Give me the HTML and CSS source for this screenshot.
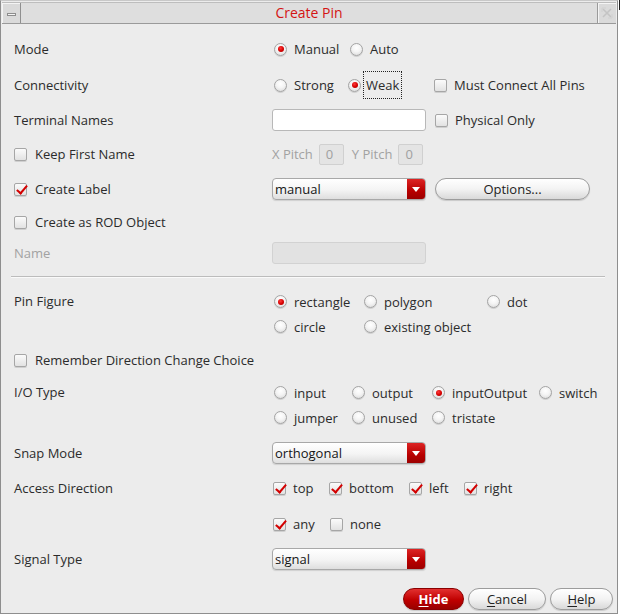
FILE: index.html
```html
<!DOCTYPE html>
<html>
<head>
<meta charset="utf-8">
<link rel="stylesheet" href="styles.css">
</head>
<body>
<div class="win">
  <div class="titlebar">
    <div class="tb-btn tb-min"><span class="dash"></span></div>
    <div class="title">Create Pin</div>
    <div class="tb-btn tb-close">
      <svg width="12" height="12" viewBox="0 0 12 12"><path d="M2 2 L10 10 M10 2 L2 10" stroke="#c4c4c4" stroke-width="1.6" fill="none"/><path d="M1 5 L1 1 L5 1 M7 11 L11 11 L11 7" stroke="#d0d0d0" stroke-width="1" fill="none"/></svg>
    </div>
  </div>

  <div class="form">
    <div class="row h36">
      <div class="label">Mode</div>
      <div class="opts c-mode">
        <label class="opt"><span class="radio on"></span>Manual</label>
        <label class="opt"><span class="radio"></span>Auto</label>
      </div>
    </div>

    <div class="row h36">
      <div class="label">Connectivity</div>
      <div class="opts c-conn">
        <label class="opt"><span class="radio"></span>Strong</label>
        <label class="opt"><span class="radio on"></span><span class="focus">Weak</span></label>
        <label class="opt"><span class="check"></span>Must Connect All Pins</label>
      </div>
    </div>

    <div class="row h34">
      <div class="label">Terminal Names</div>
      <div class="ctrls">
        <div class="textbox"></div>
        <label class="opt"><span class="check"></span>Physical Only</label>
      </div>
    </div>

    <div class="row h34">
      <label class="label opt"><span class="check"></span>Keep First Name</label>
      <div class="ctrls pitch">
        <span class="dim">X Pitch</span>
        <span class="pitchbox">0</span>
        <span class="dim ypitch">Y Pitch</span>
        <span class="pitchbox">0</span>
      </div>
    </div>

    <div class="row h36">
      <label class="label opt"><span class="check on"></span>Create Label</label>
      <div class="ctrls">
        <div class="combo"><span class="combo-text">manual</span><span class="combo-arrow"></span></div>
        <div class="btn options">Options...</div>
      </div>
    </div>

    <div class="row h30">
      <label class="label opt"><span class="check"></span>Create as ROD Object</label>
      <div></div>
    </div>

    <div class="row h32">
      <div class="label dim">Name</div>
      <div class="ctrls"><div class="textbox disabled"></div></div>
    </div>

    <div class="sep"></div>

    <div class="row multi pf">
      <div class="label">Pin Figure</div>
      <div class="opts c-pf">
        <label class="opt"><span class="radio on"></span>rectangle</label>
        <label class="opt"><span class="radio"></span>polygon</label>
        <label class="opt"><span class="radio"></span>dot</label>
        <label class="opt"><span class="radio"></span>circle</label>
        <label class="opt"><span class="radio"></span>existing object</label>
      </div>
    </div>

    <div class="row h40">
      <label class="label wide opt"><span class="check"></span>Remember Direction Change Choice</label>
    </div>

    <div class="row multi io">
      <div class="label">I/O Type</div>
      <div class="opts c-io">
        <label class="opt"><span class="radio"></span>input</label>
        <label class="opt"><span class="radio"></span>output</label>
        <label class="opt"><span class="radio on"></span>inputOutput</label>
        <label class="opt"><span class="radio"></span>switch</label>
        <label class="opt"><span class="radio"></span>jumper</label>
        <label class="opt"><span class="radio"></span>unused</label>
        <label class="opt"><span class="radio"></span>tristate</label>
      </div>
    </div>

    <div class="row h46">
      <div class="label">Snap Mode</div>
      <div class="ctrls"><div class="combo"><span class="combo-text">orthogonal</span><span class="combo-arrow"></span></div></div>
    </div>

    <div class="row h24">
      <div class="label">Access Direction</div>
      <div class="opts c-acc">
        <label class="opt"><span class="check on"></span>top</label>
        <label class="opt"><span class="check on"></span>bottom</label>
        <label class="opt"><span class="check on"></span>left</label>
        <label class="opt"><span class="check on"></span>right</label>
      </div>
    </div>

    <div class="row h48">
      <div class="label"></div>
      <div class="opts c-any">
        <label class="opt"><span class="check on"></span>any</label>
        <label class="opt"><span class="check"></span>none</label>
      </div>
    </div>

    <div class="row h22">
      <div class="label">Signal Type</div>
      <div class="ctrls"><div class="combo"><span class="combo-text">signal</span><span class="combo-arrow"></span></div></div>
    </div>

    <div class="buttons">
      <div class="btn primary hide"><u>H</u>ide</div>
      <div class="btn cancel"><u>C</u>ancel</div>
      <div class="btn help"><u>H</u>elp</div>
    </div>
  </div>
</div>
<div class="corner"></div>
</body>
</html>
```

FILE: styles.css
```css
html, body {
  margin: 0;
  padding: 0;
  background: #ffffff;
}
body {
  font-family: "Open Sans", "DejaVu Sans", sans-serif;
  font-size: 13px;
  color: #2b2b2b;
  position: relative;
  width: 620px;
  height: 615px;
  overflow: hidden;
}
.corner {
  position: absolute;
  left: 619px;
  top: 0;
  width: 1px;
  height: 10px;
  background: #222;
}
.win {
  box-sizing: border-box;
  width: 618px;
  height: 614px;
  border: 1px solid #8e8e8e;
  border-top-color: #c8c8c8;
  background-color: #efefef;
  background-image: radial-gradient(circle, rgba(0,0,0,0.035) 0.5px, transparent 0.8px);
  background-size: 2px 2px;
}
.titlebar {
  display: flex;
  height: 20px;
  margin: 1px 1px 0 1px;
  background: #dedede;
  border-top: 1px solid #bdbdbd;
  border-bottom: 1px solid #9a9a9a;
}
.tb-btn {
  width: 18px;
  height: 20px;
  display: flex;
  align-items: center;
  justify-content: center;
  background: #dadada;
}
.tb-min {
  border-right: 1px solid #8f8f8f;
  box-shadow: inset 1px 1px 0 #f4f4f4;
}
.dash {
  width: 9px;
  height: 3px;
  box-sizing: border-box;
  border: 1px solid #8d8d8d;
  background: #f4f4f4;
  margin-top: 2px;
}
.tb-close {
  border-left: 1px solid #9a9a9a;
  box-shadow: inset 1px 1px 0 #f4f4f4;
}
.title {
  flex: 1;
  text-align: center;
  color: #d41414;
  font-size: 14px;
  line-height: 19px;
}

.form {
  padding: 7px 0 0 13px;
}
.row {
  display: grid;
  grid-template-columns: 258px 1fr;
  align-items: center;
}
.h22 { height: 22px; }
.h24 { height: 24px; }
.h30 { height: 30px; }
.h32 { height: 32px; }
.h34 { height: 34px; }
.h36 { height: 36px; }
.h40 { height: 40px; }
.h46 { height: 46px; }
.h48 { height: 48px; }
.label {
  white-space: nowrap;
}
.label.wide {
  grid-column: 1 / 3;
}
.dim {
  color: #a2a2a2;
}

.opt {
  display: inline-flex;
  align-items: center;
  white-space: nowrap;
}
.opts {
  display: grid;
  align-items: center;
}
.c-mode { grid-template-columns: 76px auto; padding-left: 2px; }
.c-conn { grid-template-columns: 74px 86px auto; padding-left: 2px; }
.c-pf { grid-template-columns: 90px 123px auto; padding-left: 2px; grid-auto-rows: 25px; }
.c-io { grid-template-columns: 78px 80px 107px auto; padding-left: 2px; grid-auto-rows: 25px; }
.c-acc { grid-template-columns: 56px 80px 55px auto; padding-left: 1px; }
.c-any { grid-template-columns: 57px auto; padding-left: 1px; }

.multi {
  align-items: start;
}
.multi .label {
  line-height: 25px;
}
.pf {
  height: 56px;
  padding-top: 5px;
  box-sizing: border-box;
}
.io {
  height: 50px;
}

.radio {
  position: relative;
  box-sizing: border-box;
  width: 13px;
  height: 13px;
  border-radius: 50%;
  border: 1px solid #a4a4a4;
  background: radial-gradient(circle at 50% 35%, #ffffff 0%, #f4f4f4 45%, #d6d6d6 100%);
  box-shadow: 0 1px 0 rgba(0,0,0,0.12);
  margin-right: 7px;
  flex: none;
}
.radio.on::after {
  content: "";
  position: absolute;
  left: 2.5px;
  top: 2.5px;
  width: 6px;
  height: 6px;
  border-radius: 50%;
  background: radial-gradient(circle at 40% 35%, #ff3a3a 0%, #d40000 55%, #a00000 100%);
}

.check {
  position: relative;
  box-sizing: border-box;
  width: 13px;
  height: 13px;
  border: 1px solid #a6a6a6;
  border-radius: 2px;
  background: linear-gradient(#fbfbfb, #e2e2e2);
  box-shadow: 0 1px 0 rgba(0,0,0,0.12);
  margin-right: 7px;
  flex: none;
}
.label .check {
  margin-right: 8px;
}
.check.on::after {
  content: "";
  position: absolute;
  left: 3.5px;
  top: -1px;
  width: 4px;
  height: 9px;
  border-right: 2.5px solid #d30000;
  border-bottom: 2.5px solid #d30000;
  transform: rotate(40deg);
}

.focus {
  outline: 1px dotted #222;
  outline-offset: 0;
  padding: 4px 2px 4px 2px;
  margin-left: -4px;
}

.ctrls {
  display: flex;
  align-items: center;
}
.textbox {
  box-sizing: border-box;
  width: 154px;
  height: 22px;
  background: #ffffff;
  border: 1px solid #b8b8b8;
  border-radius: 3px;
  margin-right: 9px;
}
.textbox.disabled {
  background: #e2e2e2;
  border-color: #d2d2d2;
}
.pitch .dim {
  margin-right: 6px;
}
.pitch .ypitch {
  margin-left: 8px;
}
.pitchbox {
  box-sizing: border-box;
  width: 25px;
  height: 21px;
  background: #e4e4e4;
  border: 1px solid #d0d0d0;
  border-radius: 2px;
  color: #a0a0a0;
  padding-left: 6px;
  line-height: 19px;
}

.combo {
  box-sizing: border-box;
  width: 154px;
  height: 22px;
  display: flex;
  border: 1px solid #a8a8a8;
  border-radius: 4px;
  background: linear-gradient(#ffffff, #f4f4f4 55%, #dedede);
  box-shadow: 0 1px 1px rgba(0,0,0,0.12);
  overflow: hidden;
  margin-right: 9px;
}
.combo-text {
  flex: 1;
  padding-left: 2px;
  line-height: 20px;
  color: #151515;
}
.combo-arrow {
  position: relative;
  width: 18px;
  background: linear-gradient(#dc2424, #b80000 60%, #9c0000);
}
.combo-arrow::after {
  content: "";
  position: absolute;
  left: 5px;
  top: 8px;
  border-left: 4px solid transparent;
  border-right: 4px solid transparent;
  border-top: 5px solid #ffffff;
}

.btn {
  box-sizing: border-box;
  height: 22px;
  border: 1px solid #9c9c9c;
  border-radius: 11px;
  background: linear-gradient(#ffffff, #f3f3f3 50%, #d9d9d9);
  box-shadow: 0 1px 1px rgba(0,0,0,0.15);
  display: flex;
  align-items: center;
  justify-content: center;
  color: #222;
}
.options {
  width: 155px;
}
.sep {
  height: 7px;
  margin: 0 0 7px -3px;
  width: 594px;
  border-bottom: 1px solid #bcbcbc;
  box-shadow: 0 1px 0 #fafafa;
}
.buttons {
  display: flex;
  justify-content: flex-end;
  gap: 4px;
  margin-top: 18px;
  padding-right: 4px;
}
.hide { width: 61px; }
.cancel { width: 78px; }
.help { width: 63px; }
.btn.primary {
  background: linear-gradient(#e23030, #c00000 55%, #980000);
  border-color: #8a0000;
  color: #ffffff;
  font-weight: bold;
}
.btn u {
  text-decoration-thickness: 1px;
  text-underline-offset: 2px;
}
```
